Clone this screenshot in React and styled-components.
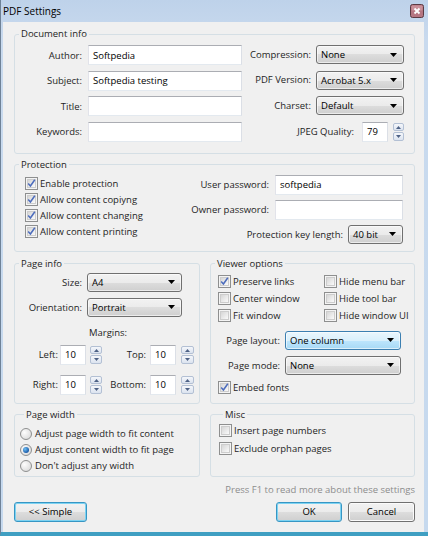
import styled, { createGlobalStyle } from 'styled-components';

const GlobalStyle = createGlobalStyle`
  html, body { margin: 0; padding: 0; background: #f0f0f0; }
  body {
    font-family: "Open Sans", "Noto Sans", sans-serif;
    font-size: 9.5px;
    color: #1e1e1e;
  }
  * { box-sizing: border-box; }
`;

const Window = styled.div`
  width: 428px;
  height: 536px;
  display: flex;
  flex-direction: column;
  background: linear-gradient(#bed2ea, #c9daee 40px, #c6d9ee);
  border-left: 1px solid #6f8297;
  border-bottom: 4px solid #3f9fc2;
`;

const TitleBar = styled.div`
  height: 22px;
  flex: none;
  display: flex;
  align-items: center;
  justify-content: space-between;
  padding: 0 4px 0 2px;
`;

const Title = styled.span`
  font-size: 10px;
  color: #000;
`;

const Body = styled.div`
  flex: 1;
  margin: 0 4px 0 2px;
  background: #f0f0f0;
  padding: 5px 9px 0 11px;
  display: flex;
  flex-direction: column;
`;

const Group = styled.fieldset`
  margin: ${p => p.$mt || 0}px 0 0 0;
  padding: ${p => p.$pad || '0'};
  border: 1px solid #d5dfe5;
  border-radius: 3px;
  min-width: 0;
  flex: ${p => p.$flex || 'none'};
  width: ${p => (p.$w ? p.$w + 'px' : 'auto')};
`;

const Legend = styled.legend`
  margin-left: 4px;
  padding: 0 2px;
  line-height: 14px;
`;

const Row = styled.div`
  display: flex;
  gap: ${p => p.$gap || 0}px;
  margin-top: ${p => p.$mt || 0}px;
  align-items: ${p => p.$align || 'stretch'};
`;

const DocGrid = styled.div`
  display: grid;
  grid-template-columns: 73px 154px 74px 88px;
  row-gap: 5.6px;
  align-items: start;
`;

const Label = styled.span`
  height: ${p => p.$h || 20}px;
  display: flex;
  align-items: center;
  justify-content: flex-end;
  padding-right: ${p => p.$pr || 0}px;
  padding-left: ${p => p.$pl || 0}px;
  white-space: nowrap;
`;

const Field = styled.div`
  width: ${p => (p.$w ? p.$w + 'px' : 'auto')};
  height: 20px;
  background: #fff;
  border: 1px solid;
  border-color: #abadb3 #dbdfe6 #e3e9ef #e2e3ea;
  display: flex;
  align-items: center;
  padding-left: 4px;
  color: #000;
`;

const Span = styled.div`
  grid-column: ${p => p.$col};
  display: flex;
  justify-content: flex-end;
  align-items: center;
  gap: ${p => p.$gap || 0}px;
`;

const SelectBox = styled.div`
  width: ${p => p.$w}px;
  height: 19px;
  border: 1px solid ${p => (p.$active ? '#3c7fb1' : '#707070')};
  border-radius: 3px;
  background: ${p =>
    p.$active
      ? 'linear-gradient(#eaf6fd 0%, #d9f0fc 50%, #bee6fd 50%, #a7d9f5 100%)'
      : 'linear-gradient(#f2f2f2 0%, #ebebeb 50%, #dddddd 50%, #cfcfcf 100%)'};
  box-shadow: inset 0 0 0 1px rgba(255, 255, 255, 0.6);
  display: flex;
  align-items: center;
  justify-content: space-between;
  padding: 0 6px 0 4px;
  color: #000;
  flex: none;
`;

const Arrow = () => (
  <svg width="7" height="4" viewBox="0 0 7 4">
    <path d="M0 0h7L3.5 4z" fill="#000" />
  </svg>
);

const Select = ({ w, value, active }) => (
  <SelectBox $w={w} $active={active}>
    <span>{value}</span>
    <Arrow />
  </SelectBox>
);

const SpinCol = styled.div`
  display: flex;
  flex-direction: column;
  gap: 1px;
  width: ${p => p.$w || 12}px;
  height: 20px;
  padding: 1px 0;
  flex: none;
`;

const SpinBtn = styled.span`
  flex: 1;
  border: 1px solid #b3c0d4;
  border-radius: 2px;
  background: linear-gradient(#f5f7fb, #dbe3ef);
  display: flex;
  align-items: center;
  justify-content: center;
`;

const Spinner = ({ w }) => (
  <SpinCol $w={w}>
    <SpinBtn>
      <svg width="5" height="3" viewBox="0 0 5 3"><path d="M0 3h5L2.5 0z" fill="#4d6185" /></svg>
    </SpinBtn>
    <SpinBtn>
      <svg width="5" height="3" viewBox="0 0 5 3"><path d="M0 0h5L2.5 3z" fill="#4d6185" /></svg>
    </SpinBtn>
  </SpinCol>
);

const SpinField = styled.div`
  display: flex;
  gap: ${p => p.$gap || 4}px;
  align-items: center;
`;

const Check = styled.div`
  display: flex;
  align-items: center;
  gap: 2px;
  height: ${p => p.$h || 16}px;
  white-space: nowrap;
`;

const Box = styled.span`
  width: 13px;
  height: 13px;
  flex: none;
  border: 1px solid #8e8f8f;
  background: #f4f4f4;
  padding: 1px;
  display: flex;
`;

const BoxInner = styled.span`
  flex: 1;
  border: 1px solid #cdcdcd;
  background: linear-gradient(135deg, #d6d6d6, #fafafa);
  display: flex;
  align-items: center;
  justify-content: center;
`;

const CheckBox = ({ checked, label, h }) => (
  <Check $h={h}>
    <Box>
      <BoxInner>
        {checked && (
          <svg width="11" height="11" viewBox="0 0 11 11" style={{ margin: -2 }}>
            <path d="M2.2 5.6 L4.4 8 L8.8 1.8" stroke="#4c6cbc" strokeWidth="1.5" fill="none" />
          </svg>
        )}
      </BoxInner>
    </Box>
    <span>{label}</span>
  </Check>
);

const Dot = styled.span`
  width: 12px;
  height: 12px;
  flex: none;
  border-radius: 50%;
  border: 1px solid #8e8f8f;
  background: radial-gradient(circle at 35% 35%, #fdfdfd, #d4d4d4);
  display: flex;
  align-items: center;
  justify-content: center;
  margin-right: 1px;
`;

const DotFill = styled.span`
  width: 6px;
  height: 6px;
  border-radius: 50%;
  background: radial-gradient(circle at 35% 35%, #6fc0f5, #1b5ba8 70%);
`;

const Radio = ({ checked, label }) => (
  <Check $h={16}>
    <Dot>{checked && <DotFill />}</Dot>
    <span>{label}</span>
  </Check>
);

const Stack = styled.div`
  display: flex;
  flex-direction: column;
  padding: ${p => p.$pad || 0};
  flex: ${p => p.$flex || 'none'};
`;

const PassGrid = styled.div`
  display: grid;
  grid-template-columns: auto 128px;
  row-gap: 5px;
  padding-top: 3px;
  align-items: start;
`;

const InfoGrid = styled.div`
  display: grid;
  grid-template-columns: 72px 95px;
  row-gap: 6px;
  padding-top: 2px;
`;

const MarginsTitle = styled.div`
  line-height: 14px;
  padding-left: 74px;
  margin-top: 9px;
`;

const MarginGrid = styled.div`
  display: grid;
  grid-template-columns: 45px 42px 48px 44px;
  row-gap: 10px;
  margin-top: 5px;
`;

const ViewerChecks = styled.div`
  display: grid;
  grid-template-columns: 106px auto;
  grid-auto-rows: 17px;
  padding: 2px 0 0 7px;
`;

const ViewerGrid = styled.div`
  display: grid;
  grid-template-columns: 74px 116px;
  row-gap: 6px;
  margin-top: 7px;
`;

const Hint = styled.div`
  margin-top: 6px;
  line-height: 14px;
  text-align: right;
  color: #8d8d8d;
`;

const ButtonRow = styled.div`
  display: flex;
  justify-content: space-between;
  margin-top: 5px;
`;

const Button = styled.button`
  width: ${p => p.$w}px;
  height: 20px;
  font: inherit;
  color: #000;
  padding: 0;
  border-radius: 3px;
  border: 1px solid ${p => (p.$focus ? '#3796c4' : '#707070')};
  background: linear-gradient(#f2f2f2 0%, #ebebeb 50%, #dddddd 50%, #cfcfcf 100%);
  box-shadow: inset 0 0 0 1px ${p => (p.$focus ? '#7dd3f2' : '#fbfbfb')};
`;

const CloseBtn = () => (
  <svg width="14" height="14" viewBox="0 0 14 14">
    <rect x="0.5" y="0.5" width="13" height="13" rx="2" fill="#b67682" stroke="#5b3a43" />
    <rect x="1.5" y="1.5" width="11" height="5" rx="1" fill="#d7a4ac" opacity="0.6" />
    <path d="M4.5 4.5l5 5M9.5 4.5l-5 5" stroke="#fff" strokeWidth="1.8" />
  </svg>
);

export default function App() {
  return (
    <>
      <GlobalStyle />
      <Window>
        <TitleBar>
          <Title>PDF Settings</Title>
          <CloseBtn />
        </TitleBar>
        <Body>
          <Group $pad="4px 10px 11px 0">
            <Legend>Document info</Legend>
            <DocGrid>
              <Label $pr={6}>Author:</Label>
              <Field>Softpedia</Field>
              <Label $pr={5} $h={18}>Compression:</Label>
              <Select w={88} value="None" />

              <Label $pr={6}>Subject:</Label>
              <Field>Softpedia testing</Field>
              <Label $pr={5} $h={18}>PDF Version:</Label>
              <Select w={88} value="Acrobat 5.x" />

              <Label $pr={6}>Title:</Label>
              <Field />
              <Label $pr={5} $h={18}>Charset:</Label>
              <Select w={88} value="Default" />

              <Label $pr={6}>Keywords:</Label>
              <Field />
              <Span $col="3 / 5">
                <Label $pr={8}>JPEG Quality:</Label>
                <SpinField $gap={5}>
                  <Field $w={26}>79</Field>
                  <Spinner w={11} />
                </SpinField>
              </Span>
            </DocGrid>
          </Group>

          <Group $mt={4} $pad="0 11px 7px 0">
            <Legend>Protection</Legend>
            <Row>
              <Stack $flex="1" $pad="4px 0 0 10px">
                <CheckBox checked label="Enable protection" />
                <CheckBox checked label="Allow content copiyng" />
                <CheckBox checked label="Allow content changing" />
                <CheckBox checked label="Allow content printing" />
              </Stack>
              <PassGrid>
                <Label $pr={6}>User password:</Label>
                <Field>softpedia</Field>
                <Label $pr={6}>Owner password:</Label>
                <Field />
                <Span $col="1 / 3" $gap={5}>
                  <Label $h={19}>Protection key length:</Label>
                  <Select w={55} value="40 bit" />
                </Span>
              </PassGrid>
            </Row>
          </Group>

          <Row $gap={10} $mt={5}>
            <Group $w={186} $pad="0 0 8px 0">
              <Legend>Page info</Legend>
              <InfoGrid>
                <Label $pr={5} $h={19}>Size:</Label>
                <Select w={95} value="A4" />
                <Label $pr={5} $h={19}>Orientation:</Label>
                <Select w={95} value="Portrait" />
              </InfoGrid>
              <MarginsTitle>Margins:</MarginsTitle>
              <MarginGrid>
                <Label $pr={2}>Left:</Label>
                <SpinField $gap={4}>
                  <Field $w={26}>10</Field>
                  <Spinner w={12} />
                </SpinField>
                <Label $pr={4}>Top:</Label>
                <SpinField $gap={5}>
                  <Field $w={26}>10</Field>
                  <Spinner w={13} />
                </SpinField>
                <Label $pr={2}>Right:</Label>
                <SpinField $gap={4}>
                  <Field $w={26}>10</Field>
                  <Spinner w={12} />
                </SpinField>
                <Label $pr={4}>Bottom:</Label>
                <SpinField $gap={5}>
                  <Field $w={26}>10</Field>
                  <Spinner w={13} />
                </SpinField>
              </MarginGrid>
            </Group>

            <Group $flex="1" $pad="0 0 4px 0">
              <Legend>Viewer options</Legend>
              <ViewerChecks>
                <CheckBox checked label="Preserve links" h={17} />
                <CheckBox label="Hide menu bar" h={17} />
                <CheckBox label="Center window" h={17} />
                <CheckBox label="Hide tool bar" h={17} />
                <CheckBox label="Fit window" h={17} />
                <CheckBox label="Hide window UI" h={17} />
              </ViewerChecks>
              <ViewerGrid>
                <Label $pr={5} $h={19}>Page layout:</Label>
                <Select w={116} value="One column" active />
                <Label $pr={5} $h={19}>Page mode:</Label>
                <Select w={116} value="None" />
              </ViewerGrid>
              <Stack $pad="5px 0 0 7px">
                <CheckBox checked label="Embed fonts" />
              </Stack>
            </Group>
          </Row>

          <Row $gap={10} $mt={4}>
            <Group $w={186} $pad="4px 0 2px 5px">
              <Legend>Page width</Legend>
              <Radio label="Adjust page width to fit content" />
              <Radio checked label="Adjust content width to fit page" />
              <Radio label="Don't adjust any width" />
            </Group>
            <Group $flex="1" $pad="0 0 2px 8px">
              <Legend>Misc</Legend>
              <CheckBox label="Insert page numbers" h={18} />
              <CheckBox label="Exclude orphan pages" h={18} />
            </Group>
          </Row>

          <Hint>Press F1 to read more about these settings</Hint>

          <ButtonRow>
            <Button $w={73} $focus>&lt;&lt; Simple</Button>
            <Row $gap={6}>
              <Button $w={66} $focus>OK</Button>
              <Button $w={67}>Cancel</Button>
            </Row>
          </ButtonRow>
        </Body>
      </Window>
    </>
  );
}
